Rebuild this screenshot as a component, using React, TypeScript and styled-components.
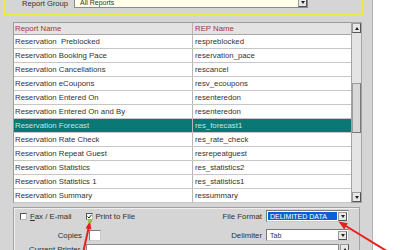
import React from "react";
import styled, { createGlobalStyle } from "styled-components";

const GlobalStyle = createGlobalStyle`
  html, body { margin: 0; padding: 0; background: #ffffff; }
  body { font-family: "Liberation Sans", Arial, sans-serif; }
`;

const Stage = styled.div`
  position: relative;
  width: 400px;
  height: 250px;
  overflow: hidden;
  background: #ffffff;
`;

const Window = styled.div`
  width: 373px;
  height: 250px;
  background: #d5d5d5;
  border-right: 1px solid #b4b4b4;
  box-sizing: border-box;
  display: flex;
  flex-direction: column;
  font-size: 7.8px;
  color: #303030;
  overflow: hidden;
  & > * { flex-shrink: 0; }
`;

const GroupPanel = styled.div`
  margin: -6px 9px 0 3px;
  height: 22px;
  box-sizing: border-box;
  border: 2px solid #eeea3a;
  border-top: none;
  display: flex;
  align-items: flex-start;
  padding: 0 0 0 17px;
`;

const GroupLabel = styled.span`
  font-size: 7.6px;
  line-height: 9px;
  margin-top: 5px;
  color: #333;
  width: 52px;
`;

const GroupSelect = styled.div`
  width: 234px;
  height: 14px;
  box-sizing: border-box;
  background: #ffffea;
  border: 1px solid #8a8a8a;
  border-top: none;
  display: flex;
  align-items: flex-end;
  justify-content: space-between;
  padding: 0 0 0 5px;
  font-size: 7px;
  line-height: 9px;
  color: #333;
`;

const DropButton = styled.div<{ $h?: number }>`
  width: 9px;
  height: ${(p) => p.$h ?? 9}px;
  box-sizing: border-box;
  background: #e8e8e8;
  border: 1px solid #9a9a9a;
  border-right-color: #555;
  border-bottom-color: #555;
  display: flex;
  align-items: center;
  justify-content: center;
  flex-shrink: 0;
`;

const Tri = styled.span<{ $up?: boolean }>`
  width: 0;
  height: 0;
  border-left: 2.5px solid transparent;
  border-right: 2.5px solid transparent;
  ${(p) =>
    p.$up
      ? "border-bottom: 3px solid #222;"
      : "border-top: 3px solid #222;"}
`;

const TableWrap = styled.div`
  margin: 6px 10px 0 13px;
  display: flex;
  height: 181px;
`;

const Table = styled.div`
  flex: 1;
  background: #ffffff;
  border: 1px solid #9c9c9c;
  border-right: none;
  box-sizing: border-box;
  display: flex;
  flex-direction: column;
`;

const Row = styled.div<{ $head?: boolean; $sel?: boolean }>`
  display: grid;
  grid-template-columns: 179px 1fr;
  height: ${(p) => (p.$head ? 12 : 14)}px;
  flex-shrink: 0;
  box-sizing: border-box;
  border-bottom: 1px solid ${(p) => (p.$head ? "#a8a8a8" : "#c6c6c6")};
  background: ${(p) => (p.$head ? "#e3e3e3" : p.$sel ? "#0a7874" : "#ffffff")};
  color: ${(p) => (p.$head ? "#a3343c" : p.$sel ? "#c4e4e1" : "#333333")};
  align-items: center;
`;

const Cell = styled.div<{ $first?: boolean }>`
  height: 100%;
  display: flex;
  align-items: center;
  padding-left: ${(p) => (p.$first ? 1 : 2)}px;
  border-right: ${(p) => (p.$first ? "1px solid #b8b8b8" : "none")};
  white-space: pre;
  overflow: hidden;
`;

const Scrollbar = styled.div`
  width: 11px;
  background: #e4e4e4;
  border: 1px solid #a4a4a4;
  box-sizing: border-box;
  display: flex;
  flex-direction: column;
`;

const Track = styled.div`
  flex: 1;
  display: flex;
  flex-direction: column;
  padding-top: 50px;
`;

const Thumb = styled.div`
  height: 50px;
  background: #d8d8d8;
  border: 1px solid #9c9c9c;
  border-right-color: #777;
  border-bottom-color: #777;
  box-sizing: border-box;
`;

const BottomPanel = styled.div`
  margin: 4px 12px 0 13px;
  height: 60px;
  border: 1px solid #a2a2a2;
  border-bottom: none;
  box-shadow: inset 1px 1px 0 #efefef;
  box-sizing: border-box;
  padding: 2px 10px 0 6px;
  display: flex;
  flex-direction: column;
`;

const FormRow = styled.div<{ $mt?: number }>`
  display: flex;
  align-items: center;
  height: 12px;
  flex-shrink: 0;
  margin-top: ${(p) => p.$mt ?? 0}px;
`;

const CheckItem = styled.label<{ $ml?: number }>`
  display: flex;
  align-items: center;
  gap: 3px;
  margin-left: ${(p) => p.$ml ?? 0}px;
`;

const Box = styled.span`
  width: 7px;
  height: 7px;
  box-sizing: border-box;
  background: #ffffff;
  border: 1px solid #555;
  border-right-color: #bbb;
  border-bottom-color: #bbb;
  display: flex;
  align-items: center;
  justify-content: center;
`;

const Spacer = styled.div`
  flex: 1;
`;

const RightLabel = styled.span`
  margin-right: 4px;
`;

const LeftLabel = styled.span`
  width: 62px;
  text-align: right;
  margin-right: 7px;
`;

const Select = styled.div`
  width: 83px;
  height: 12px;
  box-sizing: border-box;
  background: #ffffff;
  border: 1px solid #7a7a7a;
  border-right-color: #ccc;
  border-bottom-color: #ccc;
  display: flex;
  align-items: center;
  padding: 1px;
`;

const SelectText = styled.div<{ $hl?: boolean }>`
  flex: 1;
  height: 100%;
  display: flex;
  align-items: center;
  padding-left: 2px;
  font-size: 7px;
  background: ${(p) => (p.$hl ? "#0b5fd6" : "transparent")};
  color: ${(p) => (p.$hl ? "#ffffff" : "#333")};
  margin-right: 1px;
`;

const SmallInput = styled.div<{ $w: number }>`
  width: ${(p) => p.$w}px;
  height: 11px;
  box-sizing: border-box;
  background: #ffffff;
  border: 1px solid #7a7a7a;
  border-right-color: #ccc;
  border-bottom-color: #ccc;
`;

const PrinterRow = styled.div`
  display: flex;
  align-items: flex-start;
  margin-top: 3px;
  height: 14px;
  flex-shrink: 0;
`;

const PrinterLabel = styled.span`
  width: 62px;
  text-align: right;
  margin-right: 6px;
  line-height: 9px;
  margin-top: 1px;
`;

const PrinterField = styled.div`
  width: 260px;
  height: 14px;
  background: #ffffff;
  border: 1px solid #8a8a8a;
  box-sizing: border-box;
  margin-right: 1px;
`;

const Underline = styled.span`
  text-decoration: underline;
`;

const Overlay = styled.svg`
  position: absolute;
  left: 0;
  top: 0;
  pointer-events: none;
`;

const rows: [string, string][] = [
  ["Reservation  Preblocked", "respreblocked"],
  ["Reservation Booking Pace", "reservation_pace"],
  ["Reservation Cancellations", "rescancel"],
  ["Reservation eCoupons", "resv_ecoupons"],
  ["Reservation Entered On", "resenteredon"],
  ["Reservation Entered On and By", "resenteredon"],
  ["Reservation Forecast", "res_forecast1"],
  ["Reservation Rate Check", "res_rate_check"],
  ["Reservation Repeat Guest", "resrepeatguest"],
  ["Reservation Statistics", "res_statistics2"],
  ["Reservation Statistics 1", "res_statistics1"],
  ["Reservation Summary", "ressummary"],
];

export default function App() {
  return (
    <Stage>
      <GlobalStyle />
      <Window>
        <GroupPanel>
          <GroupLabel>Report Group</GroupLabel>
          <GroupSelect>
            All Reports
            <DropButton $h={9}>
              <Tri />
            </DropButton>
          </GroupSelect>
        </GroupPanel>

        <TableWrap>
          <Table>
            <Row $head>
              <Cell $first>Report Name</Cell>
              <Cell>REP Name</Cell>
            </Row>
            {rows.map(([a, b], i) => (
              <Row key={i} $sel={i === 6}>
                <Cell $first>{a}</Cell>
                <Cell>{b}</Cell>
              </Row>
            ))}
          </Table>
          <Scrollbar>
            <DropButton $h={10}>
              <Tri $up />
            </DropButton>
            <Track>
              <Thumb />
            </Track>
            <DropButton $h={10}>
              <Tri />
            </DropButton>
          </Scrollbar>
        </TableWrap>

        <BottomPanel>
          <FormRow>
            <CheckItem>
              <Box />
              <span>
                <Underline>F</Underline>ax / E-mail
              </span>
            </CheckItem>
            <CheckItem $ml={14}>
              <Box>
                <svg width="5" height="5" viewBox="0 0 5 5">
                  <path d="M0.5 2.5 L2 4 L4.5 0.8" stroke="#222" strokeWidth="1" fill="none" />
                </svg>
              </Box>
              <span>Print to File</span>
            </CheckItem>
            <Spacer />
            <RightLabel>File Format</RightLabel>
            <Select>
              <SelectText $hl>DELIMITED DATA</SelectText>
              <DropButton>
                <Tri />
              </DropButton>
            </Select>
          </FormRow>
          <FormRow $mt={7}>
            <LeftLabel>Copies</LeftLabel>
            <SmallInput $w={12} />
            <Spacer />
            <RightLabel>Delimiter</RightLabel>
            <Select>
              <SelectText>Tab</SelectText>
              <DropButton>
                <Tri />
              </DropButton>
            </Select>
          </FormRow>
          <PrinterRow>
            <PrinterLabel>Current Printer</PrinterLabel>
            <PrinterField />
            <DropButton $h={10}>
              <Tri $up />
            </DropButton>
          </PrinterRow>
        </BottomPanel>
      </Window>

      <Overlay width="400" height="250" viewBox="0 0 400 250">
        <line x1="83" y1="253" x2="88.6" y2="228" stroke="#e8201c" strokeWidth="2" />
        <polygon points="90,221 91.4,229.6 85.6,228.2" fill="#e8201c" />
        <circle cx="90" cy="221" r="2.2" fill="#8cc63f" />
        <line x1="390" y1="253" x2="345" y2="225.5" stroke="#e8201c" strokeWidth="2" />
        <polygon points="338.5,221.5 347.8,223.2 344.2,229.4" fill="#e8201c" />
      </Overlay>
    </Stage>
  );
}
